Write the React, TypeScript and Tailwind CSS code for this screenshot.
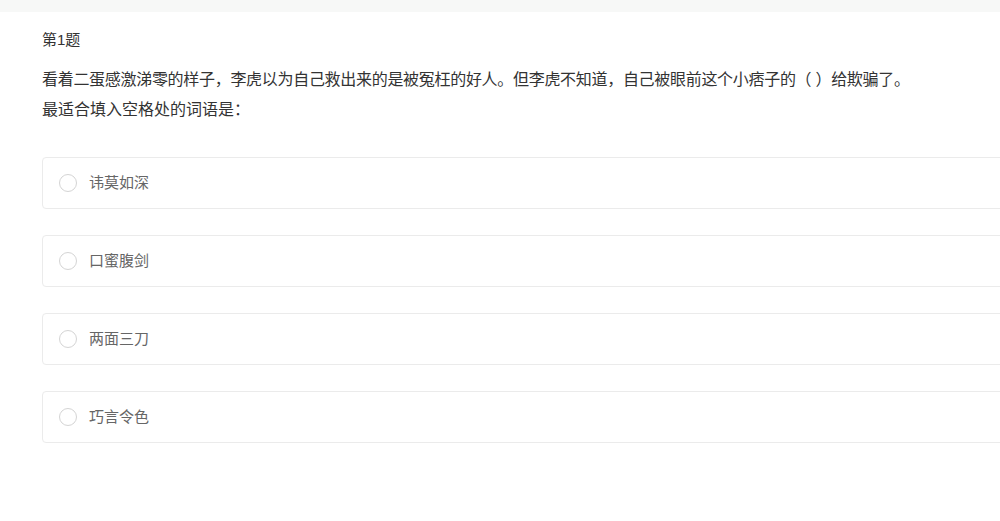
import React from "react";

const options = ["讳莫如深", "口蜜腹剑", "两面三刀", "巧言令色"];

const App: React.FC = () => {
  const [selected, setSelected] = React.useState<number | null>(null);

  return (
    <div
      className="w-[1000px] h-[521px] overflow-hidden bg-white"
      style={{ fontFamily: '"Liberation Sans", "Noto Sans CJK SC", sans-serif' }}
    >
      <div className="h-[12px] bg-[#f7f8f7]" />
      <div className="w-[1100px] pl-[42px] pt-[16px]">
        <div className="text-[15px] leading-[24px] text-[#333]">第1题</div>
        <div className="mt-[13px] text-[16px] leading-[30px] text-[#333]">
          <p className="tracking-[-0.3px]">
            看着二蛋感激涕零的样子，李虎以为自己救出来的是被冤枉的好人。但李虎不知道，自己被眼前这个小痞子的（ ）给欺骗了。
          </p>
          <p>最适合填入空格处的词语是：</p>
        </div>
        <ul className="mt-[32px] flex flex-col gap-[26px]">
          {options.map((opt, index) => (
            <li
              key={opt}
              className="h-[52px] flex items-center border border-[#ebebeb] rounded-[4px] pl-[16px] cursor-pointer"
              onClick={() => setSelected(index)}
            >
              <span
                className={`w-[18px] h-[18px] rounded-full ${
                  selected === index
                    ? "border-[5px] border-[#2f8cf0]"
                    : "border-[1.5px] border-[#d4d4d4]"
                }`}
              />
              <span className="ml-[12px] text-[15px] text-[#666]">{opt}</span>
            </li>
          ))}
        </ul>
      </div>
    </div>
  );
};

export default App;
